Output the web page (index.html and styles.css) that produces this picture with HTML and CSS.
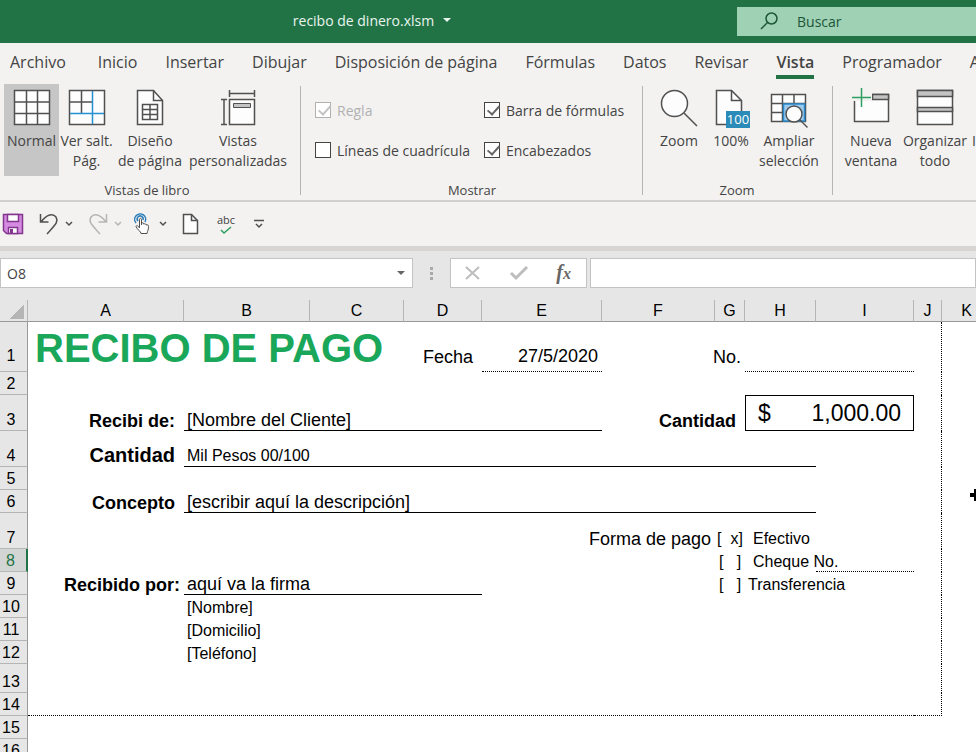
FILE: index.html
```html
<!DOCTYPE html>
<html lang="es">
<head>
    <meta charset="UTF-8">
    <meta name="viewport" content="width=device-width, initial-scale=1.0">
    <title>recibo de dinero.xlsm</title>
    <link rel="stylesheet" href="styles.css">
</head>
<body>
    <header class="title-bar">
        <button class="file-name" type="button">recibo de dinero.xlsm <span class="caret"></span></button>
        <label class="search">
            <svg width="20" height="20" viewBox="0 0 20 20"><circle cx="11.500" cy="6.500" r="5.500"/><path d="M7.500 10.500 1 17"/></svg>
            <input type="text" placeholder="Buscar" aria-label="Buscar">
        </label>
    </header>

    <nav class="tabs">
        <a href="#" class="file">Archivo</a>
        <a href="#">Inicio</a>
        <a href="#">Insertar</a>
        <a href="#">Dibujar</a>
        <a href="#">Disposición de página</a>
        <a href="#">Fórmulas</a>
        <a href="#">Datos</a>
        <a href="#">Revisar</a>
        <a href="#" class="active">Vista</a>
        <a href="#">Programador</a>
        <a href="#">Ayuda</a>
    </nav>

    <div class="ribbon">
        <section class="group views">
            <div class="tools">
                <button class="tool selected" type="button">
                    <svg width="36" height="36" viewBox="0 0 36 36"><path class="paper" d="M.5.5h35v34H.5z"/><path d="M12.500.5v34M23.500.5v34M.5 12h35M.5 23.500h35"/></svg>
                    Normal
                </button>
                <button class="tool" type="button">
                    <svg width="36" height="36" viewBox="0 0 36 36"><path class="paper" d="M.5.5h35v34H.5z"/><path d="M12.500.5v23M.5 12h23"/><path class="blue" d="M23.500 1v33M1 23.500h34"/></svg>
                    Ver salt.<br>Pág.
                </button>
                <button class="tool wide" type="button">
                    <svg width="36" height="36" viewBox="0 0 36 36"><path class="paper" d="M5.500.5h16l9 10v24h-25z"/><path d="M21.500.5v10h9M10.500 14.500h15v15h-15zM18 14.500v15M10.500 19.500h15M10.500 24.500h15"/></svg>
                    Diseño<br>de página
                </button>
                <button class="tool widest" type="button">
                    <svg width="36" height="36" viewBox="0 0 36 36"><path class="paper" d="M9.500 9.500h25v25h-25z"/><path d="M9.500 0v7M34.500 0v7M9.500 3.500h25M1 9.500h6M1 34.500h6M4 9.500v25"/><path class="grey thin" d="M13.500 13.500h17v4h-17z"/></svg>
                    Vistas<br>personalizadas
                </button>
            </div>
            <h2>Vistas de libro</h2>
        </section>

        <section class="group show">
            <div class="checks">
                <label class="off"><input type="checkbox" checked disabled>Regla</label>
                <label><input type="checkbox" checked>Barra de fórmulas</label>
                <label><input type="checkbox">Líneas de cuadrícula</label>
                <label><input type="checkbox" checked>Encabezados</label>
            </div>
            <h2>Mostrar</h2>
        </section>

        <section class="group zoom">
            <div class="tools">
                <button class="tool" type="button">
                    <svg width="38" height="36" viewBox="0 0 38 36"><circle class="paper" cx="14.500" cy="13.500" r="13"/><path d="M24 23l13 13"/></svg>
                    Zoom
                </button>
                <button class="tool" type="button">
                    <svg width="36" height="36" viewBox="0 0 36 36"><path class="paper" d="M3.500.5h15l10 10v24h-25z"/><path d="M18.500.5v10h10"/><path class="badge" d="M13 21h24v17H13z"/><text x="25" y="34">100</text></svg>
                    100%
                </button>
                <button class="tool wide" type="button">
                    <svg width="38" height="36" viewBox="0 0 38 36"><path class="paper" d="M1.500 4.500h34v27h-34z"/><path d="M12.500 4.500v27M24 4.500v9M1.500 13.500h34M1.500 22.500h11"/><path class="select" d="M13.500 14h21v17h-21z"/><circle class="paper" cx="24" cy="24" r="8"/><path d="M29.500 29.500l8 8"/></svg>
                    Ampliar<br>selección
                </button>
            </div>
            <h2>Zoom</h2>
        </section>

        <section class="group window">
            <div class="tools">
                <button class="tool wide" type="button">
                    <svg width="38" height="36" viewBox="0 0 38 36"><path class="paper" d="M2.500 4.500h34v27h-34z"/><path class="grey" d="M20.500 4.500h16v5h-16z"/><path class="clear" d="M0 0h20v11H0z"/><path class="green" d="M0 7.500h19M9.500-2v19"/></svg>
                    Nueva<br>ventana
                </button>
                <button class="tool wide" type="button">
                    <svg width="36" height="36" viewBox="0 0 36 36"><path class="paper" d="M.5.5h35v34H.5z"/><path class="grey" d="M.5.5h35v6H.5zM.5 17.500h35v4H.5z"/></svg>
                    Organizar<br>todo
                </button>
                <button class="tool cut" type="button">Inmovilizar</button>
            </div>
        </section>
    </div>

    <div class="quick-bar">
        <button type="button" aria-label="Guardar">
            <svg width="22" height="22" viewBox="0 0 22 22"><path class="disk" d="M1.500 1.500h19v19h-16l-3-3z"/><path class="disk-paper" d="M5.500 1.500h11v7h-11zM6.500 14.500h9v6h-9z"/><path class="disk-dark" d="M8 16h3v4H8z"/></svg>
        </button>
        <button class="split" type="button" aria-label="Deshacer">
            <svg width="20" height="22" viewBox="0 0 20 22"><path d="M1.500 1v8h8M2 9C8 1 14 0 17 4c3 5-1 8-9 17"/></svg>
        </button>
        <button type="button" aria-label="Opciones de deshacer"><svg width="8" height="6" viewBox="0 0 8 6"><path d="M1 1l3 3 3-3"/></svg></button>
        <button class="split off" type="button" aria-label="Rehacer">
            <svg width="20" height="22" viewBox="0 0 20 22"><path d="M18.500 1v8h-8M18 9C12 1 6 0 3 4c-3 5 1 8 9 17"/></svg>
        </button>
        <button class="off" type="button" aria-label="Opciones de rehacer"><svg width="8" height="6" viewBox="0 0 8 6"><path d="M1 1l3 3 3-3"/></svg></button>
        <button class="split" type="button" aria-label="Modo táctil">
            <svg width="16" height="22" viewBox="3 0 16 22"><path class="touch" d="M2 10a5.500 5.500 0 1 1 9-1M4 8a3 3 0 1 1 5-1"/><path class="paper thin" d="M5.500 14V6.500c0-1.500 2-1.500 2 0V12V10c2-.5 2 0 2 1 2-.5 2.500 0 2.500 1 2-.5 2.500 0 2.500 1.500 0 4-1 4-1.500 7H7c0-2-4-4-5-7 0-1 2-1.500 3.500 1.500z"/></svg>
        </button>
        <button type="button" aria-label="Opciones de modo"><svg width="8" height="6" viewBox="0 0 8 6"><path d="M1 1l3 3 3-3"/></svg></button>
        <button type="button" aria-label="Nuevo">
            <svg width="16" height="22" viewBox="0 0 16 22"><path class="paper" d="M1.500 1.500h8l6 6v13h-14z"/><path d="M9.500 1.500v6h6"/></svg>
        </button>
        <button class="spell" type="button" aria-label="Ortografía">
            abc
            <svg width="12" height="9" viewBox="0 0 12 9"><path class="green" d="M1 4l3 3 7-6"/></svg>
        </button>
        <button type="button" aria-label="Personalizar"><svg width="10" height="10" viewBox="0 0 10 10"><path d="M0 1.500h10M2 5l3 3 3-3"/></svg></button>
    </div>

    <div class="formula-bar">
        <div class="name-box">
            <input type="text" value="O8" aria-label="Cuadro de nombres">
            <span class="caret"></span>
        </div>
        <span class="dots"><i></i><i></i><i></i></span>
        <div class="formula-buttons">
            <button type="button" aria-label="Cancelar"><svg width="16" height="14" viewBox="0 0 16 14"><path d="M1 1l13 12M14 1L1 13"/></svg></button>
            <button type="button" aria-label="Introducir"><svg width="18" height="14" viewBox="0 0 18 14"><path class="thick" d="M1 7l5 5L17 1"/></svg></button>
            <button class="fx" type="button">f<small>x</small></button>
        </div>
        <input class="formula" type="text" aria-label="Barra de fórmulas">
    </div>

    <main class="sheet">
        <table>
            <colgroup>
                <col class="col-head"><col class="col-a"><col class="col-b"><col class="col-c"><col class="col-d"><col class="col-e"><col class="col-f"><col class="col-g"><col class="col-h"><col class="col-i"><col class="col-j"><col class="col-k">
            </colgroup>
            <thead>
                <tr><th class="corner"></th><th>A</th><th>B</th><th>C</th><th>D</th><th>E</th><th>F</th><th>G</th><th>H</th><th>I</th><th>J</th><th>K</th></tr>
            </thead>
            <tbody>
                <tr class="row-xl">
                    <th>1</th>
                    <td colspan="3" class="title">RECIBO DE PAGO</td>
                    <td class="right indent">Fecha</td>
                    <td class="right dotted">27/5/2020</td>
                    <td colspan="2" class="right">No.</td>
                    <td colspan="2" class="dotted"></td>
                    <td class="edge"></td><td></td>
                </tr>
                <tr><th>2</th><td colspan="9"></td><td class="edge"></td><td></td></tr>
                <tr class="row-l">
                    <th>3</th>
                    <td class="right bold indent">Recibi de:</td>
                    <td colspan="4" class="line">[Nombre del Cliente]</td>
                    <td colspan="2" class="right bold indent">Cantidad</td>
                    <td colspan="2" class="amount"><div><span>$</span><span>1,000.00</span></div></td>
                    <td class="edge"></td><td></td>
                </tr>
                <tr class="row-l">
                    <th>4</th>
                    <td class="right bold big indent">Cantidad</td>
                    <td colspan="7" class="line small">Mil Pesos 00/100</td>
                    <td></td>
                    <td class="edge"></td><td></td>
                </tr>
                <tr><th>5</th><td colspan="9"></td><td class="edge"></td><td></td></tr>
                <tr>
                    <th>6</th>
                    <td class="right bold indent">Concepto</td>
                    <td colspan="7" class="line">[escribir aquí la descripción]</td>
                    <td></td>
                    <td class="edge"></td><td></td>
                </tr>
                <tr class="row-l">
                    <th>7</th>
                    <td colspan="4"></td>
                    <td colspan="2" class="right">Forma de pago</td>
                    <td class="small mark">[&nbsp; x]</td>
                    <td class="small option">Efectivo</td>
                    <td></td>
                    <td class="edge"></td><td></td>
                </tr>
                <tr>
                    <th class="current">8</th>
                    <td colspan="6"></td>
                    <td class="small mark">[&nbsp;&nbsp; ]</td>
                    <td class="small option">Cheque No.</td>
                    <td class="dotted"></td>
                    <td class="edge"></td><td></td>
                </tr>
                <tr>
                    <th>9</th>
                    <td class="right bold">Recibido por:</td>
                    <td colspan="3" class="line">aquí va la firma</td>
                    <td colspan="2"></td>
                    <td class="small mark">[&nbsp;&nbsp; ]</td>
                    <td class="small">Transferencia</td>
                    <td></td>
                    <td class="edge"></td><td></td>
                </tr>
                <tr><th>10</th><td></td><td colspan="8" class="small">[Nombre]</td><td class="edge"></td><td></td></tr>
                <tr><th>11</th><td></td><td colspan="8" class="small">[Domicilio]</td><td class="edge"></td><td></td></tr>
                <tr><th>12</th><td></td><td colspan="8" class="small">[Teléfono]</td><td class="edge"></td><td></td></tr>
                <tr class="row-m"><th>13</th><td colspan="9"></td><td class="edge"></td><td></td></tr>
                <tr><th>14</th><td colspan="9" class="dotted"></td><td class="edge dotted"></td><td></td></tr>
                <tr><th>15</th><td colspan="11"></td></tr>
                <tr><th>16</th><td colspan="11"></td></tr>
            </tbody>
        </table>
        <svg class="pointer" width="14" height="14" viewBox="0 0 14 14"><path d="M5 1h4v4h4v4H9v4H5V9H1V5h4z"/></svg>
    </main>
</body>
</html>
```
FILE: styles.css
```css
* {
    box-sizing: border-box;
}
body {
    margin: 0;
    height: 100vh;
    display: flex;
    flex-direction: column;
    overflow: hidden;
    background-color: #f3f2f1;
    font-family: "Open Sans", "Noto Sans", sans-serif;
    font-size: 14px;
    color: #444;
}
button {
    padding: 0;
    border: 0;
    background: none;
    font: inherit;
    color: inherit;
    white-space: nowrap;
}
input {
    font: inherit;
    color: inherit;
    border: 0;
    outline: 0;
    background: none;
}
svg {
    display: block;
    overflow: visible;
    fill: none;
    stroke: #505050;
    stroke-width: 1.5;
}
.paper { fill: #fdfdfd; }
.grey { fill: #c3c3c3; }
.blue { stroke: #2490cf; }
.green { stroke: #2f9e61; }
.thin { stroke-width: 1; }
.caret {
    border: 4px solid transparent;
    border-top-color: currentColor;
    border-bottom: 0;
}

/* title bar */
.title-bar {
    flex: none;
    height: 43px;
    display: grid;
    grid-template-columns: 30% 1fr 239px;
    background-color: #217346;
    color: #e9f5ee;
}
.file-name {
    grid-column: 2;
    justify-self: start;
    height: 40px;
    display: flex;
    align-items: center;
    gap: 9px;
}
.search {
    display: flex;
    align-items: center;
    gap: 17px;
    height: 29px;
    margin-top: 7px;
    padding-left: 23px;
    background-color: #9fd1b5;
    color: #1c5637;
}
.search svg { stroke: #1c5637; }
.search input {
    flex: 1;
    min-width: 0;
    padding: 0;
}
.search input::placeholder {
    color: #1c5637;
}

/* tabs */
.tabs {
    flex: none;
    display: flex;
    gap: 28px;
    height: 41px;
    padding: 5px 0 0 10px;
    overflow: hidden;
    font-size: 16px;
    line-height: 28px;
    white-space: nowrap;
}
.tabs a {
    height: 31px;
    color: inherit;
    text-decoration: none;
}
.tabs .file {
    margin-right: 4px;
}
.tabs .active {
    font-weight: 600;
    border-bottom: 4px solid #217346;
}

/* ribbon */
.ribbon {
    flex: none;
    display: flex;
    height: 118px;
    overflow: hidden;
    border-bottom: 2px solid #d2d0ce;
}
.group {
    flex: none;
    display: flex;
    flex-direction: column;
    position: relative;
}
.group:not(.window)::after {
    content: "";
    position: absolute;
    top: 2px;
    right: 0;
    bottom: 5px;
    border-right: 1px solid #b5b5b5;
}
.group h2 {
    margin: 6px 0 0;
    font-size: 13px;
    line-height: 16px;
    font-weight: normal;
    text-align: center;
}
.views { padding: 0 11px 0 4px; }
.show { width: 342px; }
.zoom { padding: 0 12px 0 10px; }
.window { padding-left: 6px; }
.tools {
    display: flex;
    height: 92px;
}
.tool {
    display: flex;
    flex-direction: column;
    align-items: center;
    min-width: 52px;
    padding-top: 6px;
    line-height: 20px;
}
.views .tool { min-width: 55px; }
.tool svg {
    height: 36px;
    margin-bottom: 5px;
}
.tools .wide { width: 64px; }
.views .wide { width: 72px; }
.tools .widest { width: 104px; }
.tool.cut {
    align-items: flex-start;
    padding: 47px 0 0 5px;
}
.tool.selected {
    background-color: #c6c6c6;
}
.badge {
    fill: #2a8ab8;
    stroke: none;
}
.tool text {
    fill: #fff;
    stroke: none;
    font-size: 13px;
    text-anchor: middle;
}
.select {
    fill: #9ccbee;
    stroke: #2a8ad0;
}
.clear {
    fill: #f3f2f1;
    stroke: none;
}
.checks {
    display: grid;
    grid-template-columns: 169px 1fr;
    grid-auto-rows: 40px;
    height: 92px;
    padding: 6px 0 0 14px;
}
.checks label {
    display: flex;
    align-items: center;
    gap: 6px;
    white-space: nowrap;
}
.checks .off { color: #b1b1b1; }
.checks input {
    appearance: none;
    flex: none;
    width: 16px;
    height: 16px;
    margin: 0;
    border: 1px solid currentColor;
    background-color: #fff;
}
.checks input:checked::before {
    content: "";
    display: block;
    width: 5px;
    height: 10px;
    margin: 0 0 0 5px;
    border: solid #666;
    border-width: 0 2px 2px 0;
    transform: rotate(42deg);
}
.checks .off input::before { border-color: #c3c3c3; }

/* quick access bar */
.quick-bar {
    flex: none;
    display: flex;
    align-items: center;
    height: 44px;
    padding-left: 2px;
}
.quick-bar button { margin-right: 15px; }
.quick-bar .split { margin-right: 6px; }
.quick-bar .spell {
    display: flex;
    flex-direction: column;
    align-items: center;
    width: 26px;
    font-size: 11px;
    line-height: 12px;
}
.quick-bar .off svg { stroke: #b5b5b5; }
.disk {
    fill: #d58be0;
    stroke: #84368f;
}
.disk-paper {
    fill: #fff;
    stroke: #84368f;
}
.disk-dark {
    fill: #84368f;
    stroke: none;
}
.touch { stroke: #2a7ab8; }

/* formula bar */
.formula-bar {
    flex: none;
    display: flex;
    height: 54px;
    padding-top: 7px;
    border-top: 5px solid #d6d5d4;
    background-color: #e6e6e6;
}
.name-box,
.formula-buttons,
.formula {
    height: 30px;
    border: 1px solid #c3c3c3;
    background-color: #fff;
}
.name-box {
    display: flex;
    align-items: center;
    width: 413px;
    padding-right: 7px;
    color: #666;
}
.name-box input {
    flex: 1;
    padding: 0 0 0 6px;
    color: #444;
}
.dots {
    display: flex;
    flex-direction: column;
    align-items: center;
    justify-content: center;
    gap: 2px;
    width: 37px;
    height: 30px;
}
.dots i {
    width: 3px;
    height: 3px;
    background-color: #aaa;
}
.formula-buttons {
    display: flex;
    align-items: center;
    justify-content: space-between;
    width: 137px;
    padding: 0 15px 0 14px;
}
.formula-buttons svg {
    stroke: #bdbdbd;
    stroke-width: 2;
}
.formula-buttons .thick { stroke-width: 3; }
.fx {
    font: italic bold 20px/24px "Liberation Serif", serif;
    color: #666;
}
.fx small { font-size: 16px; }
.formula {
    flex: 1;
    min-width: 0;
    margin-left: 3px;
}

/* sheet */
.sheet {
    flex: 1;
    min-height: 0;
    position: relative;
    overflow: hidden;
    background-color: #fff;
    font-family: "Liberation Sans", Arial, sans-serif;
    font-size: 18px;
    line-height: 20px;
    color: #000;
}
table {
    width: 992px;
    table-layout: fixed;
    border-collapse: separate;
    border-spacing: 0;
}
.col-head { width: 28px; }
.col-a { width: 156px; }
.col-b { width: 126px; }
.col-c { width: 94px; }
.col-d { width: 78px; }
.col-e { width: 120px; }
.col-f { width: 113px; }
.col-g { width: 30px; }
.col-h { width: 71px; }
.col-i { width: 98px; }
.col-j { width: 28px; }
tr { height: 23px; }
.row-m { height: 29px; }
.row-l { height: 36px; }
.row-xl { height: 50px; }
th {
    padding: 0;
    background-color: #e6e6e6;
    font-size: 16px;
    font-weight: normal;
    vertical-align: bottom;
}
thead tr { height: 22px; }
thead th {
    border-right: 1px solid #b5b5b5;
    border-bottom: 1px solid #999;
}
tbody th {
    padding-right: 5px;
    border-right: 1px solid #999;
    border-bottom: 1px solid #b5b5b5;
}
.corner {
    background: linear-gradient(135deg, #e6e6e6 50%, #b5b5b5 50%) 10px 5px / 14px 14px no-repeat #e6e6e6;
}
tbody .current {
    background-color: #d2d5d3;
    border-right: 2px solid #217346;
    color: #217346;
}
td {
    padding: 0 4px 0 3px;
    vertical-align: bottom;
    white-space: nowrap;
}
.row-xl th,
.row-xl td {
    padding-bottom: 5px;
}
.right { text-align: right; }
.indent { padding-right: 9px; }
.bold { font-weight: bold; }
.big {
    font-size: 20px;
    line-height: 24px;
}
.small { font-size: 16px; }
.line { border-bottom: 1px solid #000; }
.dotted { border-bottom: 1px dotted #000; }
.edge { border-right: 1px dotted #000; }
.row-xl .title {
    padding: 4px 0 0 7px;
    font-size: 40px;
    font-weight: bold;
    line-height: 44px;
    vertical-align: top;
    color: #1aa75a;
}
.mark {
    padding: 0;
    text-align: center;
}
.option { padding-left: 8px; }
.amount {
    padding: 0 12px;
    border: 1px solid #000;
    font-size: 23px;
    vertical-align: middle;
}
.amount div {
    display: flex;
    justify-content: space-between;
}
.pointer {
    position: absolute;
    top: 188px;
    left: 969px;
    fill: #000;
    stroke: none;
}
```
